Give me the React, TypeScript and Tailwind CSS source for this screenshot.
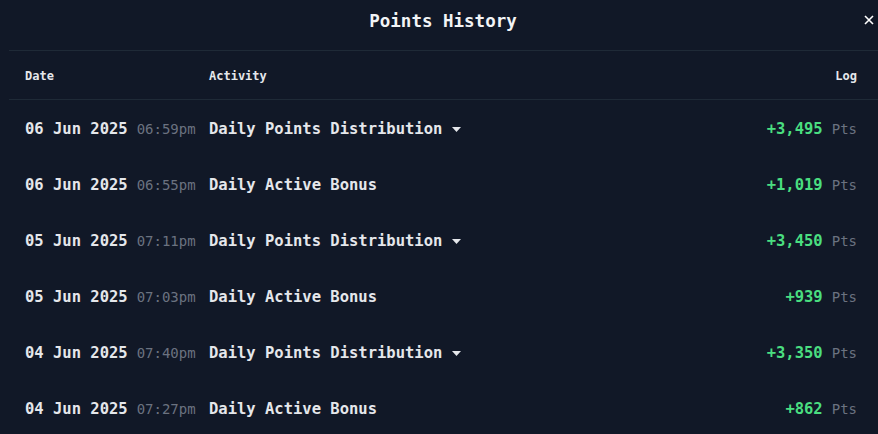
import React from 'react';

type Entry = {
  date: string;
  time: string;
  activity: string;
  expandable: boolean;
  points: string;
};

const entries: Entry[] = [
  { date: '06 Jun 2025', time: '06:59pm', activity: 'Daily Points Distribution', expandable: true, points: '+3,495' },
  { date: '06 Jun 2025', time: '06:55pm', activity: 'Daily Active Bonus', expandable: false, points: '+1,019' },
  { date: '05 Jun 2025', time: '07:11pm', activity: 'Daily Points Distribution', expandable: true, points: '+3,450' },
  { date: '05 Jun 2025', time: '07:03pm', activity: 'Daily Active Bonus', expandable: false, points: '+939' },
  { date: '04 Jun 2025', time: '07:40pm', activity: 'Daily Points Distribution', expandable: true, points: '+3,350' },
  { date: '04 Jun 2025', time: '07:27pm', activity: 'Daily Active Bonus', expandable: false, points: '+862' },
];

const mono = { fontFamily: '"DejaVu Sans Mono", "Liberation Mono", monospace' };

export default function App() {
  return (
    <div className="h-[434px] w-[878px] overflow-hidden bg-[#111827] text-[#e5e7eb]" style={mono}>
      {/* Titre */}
      <div className="relative flex h-[50px] items-center justify-center pl-2">
        <h2 className="text-[17.5px] font-bold leading-none text-[#f3f4f6] -mt-[7px]">Points History</h2>
        <button className="absolute right-[2px] top-[13px] flex h-[14px] w-[14px] items-center justify-center text-white">
          <svg width="10" height="10" viewBox="0 0 10 10" fill="none" stroke="currentColor" strokeWidth="1.6">
            <path d="M1 1L9 9M9 1L1 9" />
          </svg>
        </button>
      </div>

      {/* Tableau */}
      <div className="ml-[9px]">
        <div className="flex h-[50px] items-center border-y border-[#1f2a37] pr-[21px] pt-[1px] text-[12px] font-bold text-[#e5e7eb]">
          <div className="w-[200px] pl-4">Date</div>
          <div className="flex-1">Activity</div>
          <div className="text-right">Log</div>
        </div>
        <div className="mr-[5px]">
          {entries.map((e, idx) => (
            <div key={idx} className="flex h-[56px] items-center pr-4 pt-[3px]">
              <div className="flex w-[200px] items-baseline pl-4">
                <span className="text-[15.5px] font-bold text-[#e5e7eb]">{e.date}</span>
                <span className="ml-[9px] text-[14px] text-[#6b7280]">{e.time}</span>
              </div>
              <div className="flex flex-1 items-center">
                <span className="text-[15.5px] font-bold text-[#e5e7eb]">{e.activity}</span>
                {e.expandable && (
                  <svg className="ml-[10px]" width="9" height="5" viewBox="0 0 9 5" fill="#e5e7eb">
                    <path d="M0 0H9L4.5 5Z" />
                  </svg>
                )}
              </div>
              <div className="flex items-baseline">
                <span className="text-[15.5px] font-bold text-[#4ade80]">{e.points}</span>
                <span className="ml-[9px] text-[14px] text-[#6b7280]">Pts</span>
              </div>
            </div>
          ))}
        </div>
      </div>
    </div>
  );
}
